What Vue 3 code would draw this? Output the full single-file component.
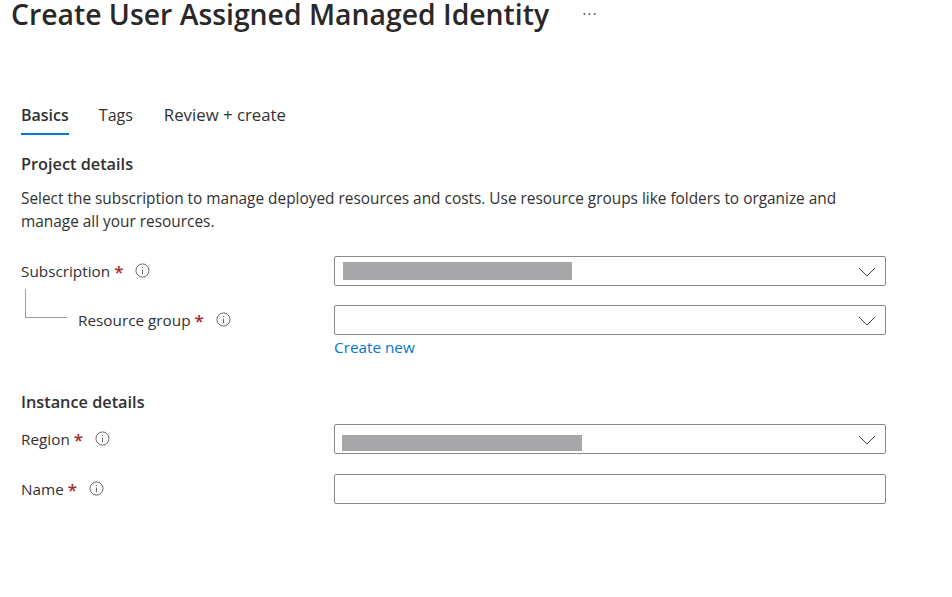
<script setup>
const tabs = [
  { label: 'Basics', active: true },
  { label: 'Tags', active: false },
  { label: 'Review + create', active: false },
]
</script>

<template>
  <div class="page">
    <div class="title-row">
      <h1>Create User Assigned Managed Identity</h1>
      <span class="more">···</span>
    </div>

    <div class="tabs">
      <span v-for="t in tabs" :key="t.label" class="tab" :class="{ active: t.active }">{{ t.label }}</span>
    </div>

    <h2 class="first">Project details</h2>
    <p class="desc">Select the subscription to manage deployed resources and costs. Use resource groups like folders to organize and manage all your resources.</p>

    <div class="row sub-row">
      <div class="label">
        <span>Subscription</span><span class="req">*</span>
        <svg class="info" viewBox="0 0 16 16"><circle cx="8" cy="8" r="7" /><path d="M8 7v5M8 4.2v1.2" /></svg>
      </div>
      <div class="field">
        <span class="mask mask-sub"></span>
        <svg class="chev" viewBox="0 0 18 10"><path d="M1 1l8 8 8-8" /></svg>
      </div>
    </div>

    <div class="row rg-row">
      <div class="label nested">
        <span class="tree"></span>
        <span>Resource group</span><span class="req">*</span>
        <svg class="info" viewBox="0 0 16 16"><circle cx="8" cy="8" r="7" /><path d="M8 7v5M8 4.2v1.2" /></svg>
      </div>
      <div class="field">
        <svg class="chev" viewBox="0 0 18 10"><path d="M1 1l8 8 8-8" /></svg>
      </div>
    </div>
    <a class="create-new">Create new</a>

    <h2 class="second">Instance details</h2>

    <div class="row region-row">
      <div class="label">
        <span>Region</span><span class="req">*</span>
        <svg class="info" viewBox="0 0 16 16"><circle cx="8" cy="8" r="7" /><path d="M8 7v5M8 4.2v1.2" /></svg>
      </div>
      <div class="field">
        <span class="mask mask-region"></span>
        <svg class="chev" viewBox="0 0 18 10"><path d="M1 1l8 8 8-8" /></svg>
      </div>
    </div>

    <div class="row name-row">
      <div class="label">
        <span>Name</span><span class="req">*</span>
        <svg class="info" viewBox="0 0 16 16"><circle cx="8" cy="8" r="7" /><path d="M8 7v5M8 4.2v1.2" /></svg>
      </div>
      <div class="field"></div>
    </div>
  </div>
</template>

<style>
html, body {
  margin: 0;
  background: #fff;
}
</style>

<style scoped>
.page {
  width: 952px;
  height: 597px;
  overflow: hidden;
  box-sizing: border-box;
  padding: 0 66px 0 21px;
  font-family: "Open Sans", "Noto Sans", sans-serif;
  font-size: 15.3px;
  color: #323130;
}

.title-row {
  display: flex;
  align-items: center;
  height: 28px;
  margin-left: -10px;
}
h1 {
  margin: 0;
  font-size: 28.35px;
  font-weight: 600;
  line-height: 28px;
  color: #292827;
  white-space: nowrap;
}
.more {
  margin-left: 33px;
  font-size: 16px;
  letter-spacing: 1px;
  color: #605e5c;
}

.tabs {
  display: flex;
  gap: 30px;
  margin-top: 72px;
  height: 35px;
}
.tab {
  font-size: 16px;
  line-height: 30px;
  height: 33px;
}
.tab:last-child {
  font-size: 16.8px;
  margin-left: 1px;
}
.tab.active {
  font-weight: 600;
  border-bottom: 2px solid #0078d4;
}

h2 {
  margin: 0;
  font-size: 16.3px;
  font-weight: 600;
  line-height: 22px;
  color: #323130;
}
h2.first { margin-top: 18px; }
h2.second { margin-top: 33px; }

.desc {
  margin: 13px 0 0;
  font-size: 15.4px;
  line-height: 22.6px;
}

.row {
  display: grid;
  grid-template-columns: 313px 552px;
  align-items: center;
  height: 30px;
}
.sub-row { margin-top: 22.8px; }
.rg-row { margin-top: 19px; }
.region-row { margin-top: 11px; }
.name-row { margin-top: 20px; }

.label {
  position: relative;
  display: flex;
  align-items: center;
  align-self: stretch;
  white-space: nowrap;
}
.label.nested { padding-left: 57px; }

.req {
  margin-left: 4px;
  margin-top: 2px;
  font-size: 17px;
  line-height: 20px;
  font-weight: 600;
  color: #a4262c;
}
.info {
  width: 15px;
  height: 15px;
  margin-left: 12px;
  fill: none;
  stroke: #605e5c;
  stroke-width: 1;
}

.tree {
  position: absolute;
  left: 4px;
  top: -16px;
  width: 41px;
  height: 28px;
  border-left: 1px solid #a19f9d;
  border-bottom: 1px solid #a19f9d;
}

.field {
  position: relative;
  box-sizing: border-box;
  height: 30px;
  border: 1px solid #8a8886;
  border-radius: 2px;
  background: #fff;
}
.mask {
  position: absolute;
  background: #a7a7aa;
}
.mask-sub {
  left: 8px;
  top: 5px;
  width: 229px;
  height: 18px;
}
.mask-region {
  left: 7px;
  top: 10px;
  width: 240px;
  height: 16px;
}
.chev {
  position: absolute;
  right: 9px;
  top: 10px;
  width: 18px;
  height: 10px;
  fill: none;
  stroke: #484644;
  stroke-width: 1;
}

.create-new {
  display: block;
  margin-left: 313px;
  margin-top: 1px;
  line-height: 22px;
  color: #0078d4;
}
</style>
